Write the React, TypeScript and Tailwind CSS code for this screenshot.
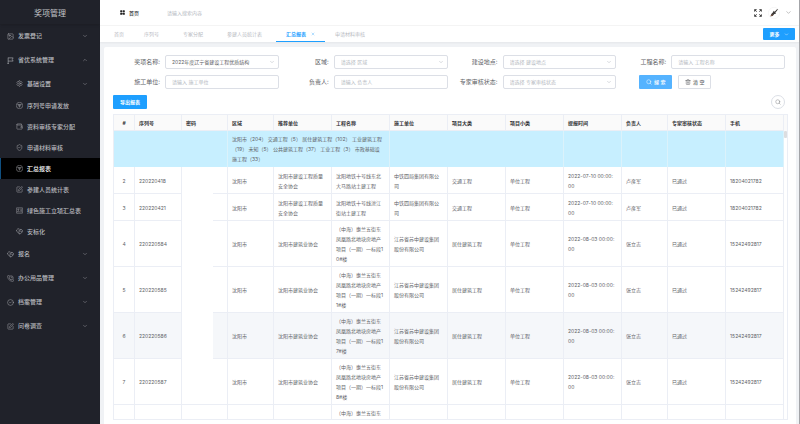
import { useState } from "react";
import {
  ChevronDown,
  ChevronUp,
  CircleCheck,
  Image,
  PhoneCall,
  Search,
  Settings,
  ShieldCheck,
  SquarePen,
  Trash2,
  Wallet,
  X,
} from "lucide-react";

function FlagIcon({ className }: { className?: string }) {
  return (
    <svg viewBox="0 0 24 24" fill="none" stroke="currentColor" strokeWidth="2" className={className}>
      <path d="M4 2v21M1 23h6M4 3h17l-3 5.5 3 5.5H4" />
    </svg>
  );
}

function SignalIcon({ className }: { className?: string }) {
  return (
    <svg viewBox="0 0 24 24" fill="none" stroke="currentColor" strokeWidth="1.5" className={className}>
      <circle cx="12" cy="12" r="11" />
      <path d="M5 9h14M8 12.5h8" strokeWidth="2" />
      <path d="M9 15h6l-3 3.5z" fill="currentColor" stroke="none" />
    </svg>
  );
}

function CardIcon({ className }: { className?: string }) {
  return (
    <svg viewBox="0 0 24 24" fill="none" stroke="currentColor" strokeWidth="1.6" className={className}>
      <rect x="1" y="3" width="22" height="18" rx="1" />
      <circle cx="8" cy="9" r="2" />
      <path d="M4 17c1-4 7-4 8 0M15 8h5M15 12h5M15 16h5" />
    </svg>
  );
}

function TagIcon({ className }: { className?: string }) {
  return (
    <svg viewBox="0 0 24 24" fill="none" stroke="currentColor" strokeWidth="1.8" className={className}>
      <path d="M12 20L2 11V7l4-4h5l3 3 3-2 5 4v5l-8 8z" />
      <path d="M14 6l-5 5 3 2 4-3 4 4M12 20l-3-4" />
    </svg>
  );
}

function GridIcon({ className }: { className?: string }) {
  return (
    <svg viewBox="0 0 24 24" fill="currentColor" className={className}>
      <rect x="1" y="1" width="10" height="10" rx="2" />
      <rect x="13" y="1" width="10" height="10" rx="2" />
      <rect x="1" y="13" width="10" height="10" rx="2" />
      <rect x="13" y="13" width="10" height="10" rx="2" />
    </svg>
  );
}

function FullscreenIcon({ className }: { className?: string }) {
  return (
    <svg viewBox="0 0 24 24" fill="none" stroke="currentColor" strokeWidth="3" className={className}>
      <path d="M2 8V2h6M2 2l6 6M16 2h6v6M22 2l-6 6M2 16v6h6M2 22l6-6M22 16v6h-6M22 22l-6-6" />
    </svg>
  );
}

function AvatarIcon({ className }: { className?: string }) {
  return (
    <svg viewBox="0 0 36 36" className={className}>
      <circle cx="18" cy="18" r="17" fill="#fff" stroke="#e8e8e8" />
      <path d="M7 29l3-8 5-5 2-5 3 3 7-7 3-1-2 4-6 7 2 3-5 1-5 6-5 1z" fill="#3d3a38" />
      <path d="M8 27l4-5 3 3-4 2z" fill="#8a5a44" />
    </svg>
  );
}

const menu = [
  { label: "发票登记", icon: Image, arrow: "down" },
  { label: "省优系统管理", icon: FlagIcon, arrow: "up" },
];

const subMenu = [
  { label: "序列号申请发放", icon: SignalIcon },
  { label: "资料审核专家分配", icon: Wallet },
  { label: "申请材料审核", icon: ShieldCheck },
  { label: "汇总报表", icon: SignalIcon },
  { label: "参建人员统计表", icon: SquarePen },
  { label: "绿色施工立项汇总表", icon: CardIcon },
  { label: "安标化", icon: TagIcon },
];

const menuBottom = [
  { label: "报名", icon: TagIcon, arrow: "down" },
  { label: "办公用品管理", icon: PhoneCall, arrow: "down" },
  { label: "档案管理", icon: CircleCheck, arrow: "down" },
  { label: "问卷调查", icon: SquarePen, arrow: "down" },
];

const tabs = ["首页", "序列号", "专家分配", "参建人员统计表", "汇总报表", "申请材料审核"];

const headers = [
  "#", "序列号", "密码", "区域", "推荐单位", "工程名称", "施工单位",
  "项目大类", "项目小类", "提报时间", "负责人", "专家审核状态", "手机",
];

const zhonghai = "（中海）惠兰五街东凤凰路北地块房地产项目（一期）一标段";

const rows = [
  ["2", "220220418", "", "沈阳市", "沈阳市建设工程质量安全协会", "沈阳地铁十号线东北大马路站土建工程", "中铁四局集团有限公司", "交通工程", "单位工程", "2022-07-10 00:00:00", "卢彦军", "已通过", "18204021782"],
  ["3", "220220421", "", "沈阳市", "沈阳市建设工程质量安全协会", "沈阳地铁十号线滂江街站土建工程", "中铁四局集团有限公司", "交通工程", "单位工程", "2022-07-10 00:00:00", "卢彦军", "已通过", "18204021782"],
  ["4", "220220584", "", "沈阳市", "沈阳市建筑业协会", zhonghai + "10#楼", "江苏省苏中建设集团股份有限公司", "居住建筑工程", "单位工程", "2022-08-03 00:00:00", "张立志", "已通过", "15242492817"],
  ["5", "220220585", "", "沈阳市", "沈阳市建筑业协会", zhonghai + "11#楼", "江苏省苏中建设集团股份有限公司", "居住建筑工程", "单位工程", "2022-08-03 00:00:00", "张立志", "已通过", "15242492817"],
  ["6", "220220586", "", "沈阳市", "沈阳市建筑业协会", zhonghai + "17#楼", "江苏省苏中建设集团股份有限公司", "居住建筑工程", "单位工程", "2022-08-03 00:00:00", "张立志", "已通过", "15242492817"],
  ["7", "220220587", "", "沈阳市", "沈阳市建筑业协会", zhonghai + "18#楼", "江苏省苏中建设集团股份有限公司", "居住建筑工程", "单位工程", "2022-08-03 00:00:00", "张立志", "已通过", "15242492817"],
  ["", "", "", "", "", "（中海）惠兰五街东", "", "", "", "", "", "", ""],
];

function MenuItem({ item }: { item: any }) {
  const Icon = item.icon;
  const Arrow = item.arrow === "up" ? ChevronUp : ChevronDown;
  return (
    <button className="flex h-6 w-full items-center pr-3 pl-[7px] text-left">
      <Icon className="mr-1 size-[7px]" strokeWidth={1.5} />
      <span className="flex-1 font-medium">{item.label}</span>
      <Arrow className="size-[6px]" strokeWidth={1.5} />
    </button>
  );
}

function Field({ id, label, placeholder, type, value }: any) {
  return (
    <div className="flex items-center">
      <label htmlFor={id} className="w-[55px] shrink-0 pr-[5px] text-right text-[6px] whitespace-nowrap text-[#606266]">
        {label}:
      </label>
      {type === "select" ? (
        <div className="relative min-w-0 flex-1">
          <select
            id={id}
            className={
              "block h-[14px] w-full appearance-none rounded-[2px] border border-[#dcdfe6] bg-white pr-3 pl-[6px] text-[5px] " +
              (value ? "text-[#606266]" : "text-[#b4b8c0]")
            }
          >
            <option>{value || placeholder}</option>
          </select>
          <ChevronDown className="pointer-events-none absolute top-1 right-1 size-[6px] text-[#b4b8c0]" strokeWidth={2} />
        </div>
      ) : (
        <input
          id={id}
          placeholder={placeholder}
          className="h-[14px] w-full min-w-0 flex-1 rounded-[2px] border border-[#dcdfe6] px-[6px] text-[5px] placeholder:text-[#b4b8c0]"
        />
      )}
    </div>
  );
}

function Columns() {
  return (
    <colgroup>
      <col className="w-[21px]" />
      <col className="w-[47px]" />
      <col className="w-[46px]" />
      <col className="w-[46px]" />
      <col className="w-[58px]" />
      <col className="w-[58px]" />
      <col className="w-[58px]" />
      <col className="w-[58px]" />
      <col className="w-[58px]" />
      <col className="w-[58px]" />
      <col className="w-[46px]" />
      <col className="w-[58px]" />
      <col className="w-[58px]" />
    </colgroup>
  );
}

export default function App() {
  const [activeTab, setActiveTab] = useState("汇总报表");

  return (
    <div lang="zh-CN" className="flex h-screen overflow-hidden bg-[#f0f2f5] font-['Inter','Noto_Sans_CJK_SC',sans-serif] text-[5px] leading-[10px] text-[#606266]">
      {/* Sidebar */}
      <aside className="w-[100px] shrink-0 bg-[#20222a] text-[6px] text-[#b9babf]">
        <h1 className="flex h-6 items-center justify-center pt-px text-[8px] text-[#c3c4c8] shadow-sm">奖项管理</h1>
        <nav>
          {menu.map((m) => (
            <MenuItem key={m.label} item={m} />
          ))}
          <button className="flex h-[23px] w-full items-center pr-3 pl-4 text-left">
            <Settings className="mr-1 size-[7px]" strokeWidth={1.5} />
            <span className="flex-1 font-medium">基础设置</span>
            <ChevronDown className="size-[6px]" strokeWidth={1.5} />
          </button>
          {subMenu.map((m) => {
            const Icon = m.icon;
            return (
              <a
                key={m.label}
                href="#"
                className={
                  "flex h-[21px] items-center border-l pl-[15px] font-medium " +
                  (m.label === "汇总报表" ? "border-[#0f4f80] bg-black text-white" : "border-transparent")
                }
              >
                <Icon className="mr-1 size-[7px] text-[#b9babf]" strokeWidth={1.5} />
                {m.label}
              </a>
            );
          })}
          {menuBottom.map((m) => (
            <MenuItem key={m.label} item={m} />
          ))}
        </nav>
      </aside>

      <div className="flex min-w-0 flex-1 flex-col border-r border-[#a3a4a8]">
        {/* Top bar */}
        <header className="flex h-[26px] shrink-0 items-center border-b border-[#f4f4f4] bg-white pr-[7px] pl-5">
          <GridIcon className="size-[5px] text-[#222]" />
          <a href="#" className="ml-1 w-[35px] font-medium text-[#303133]">首页</a>
          <input aria-label="搜索" placeholder="请输入搜索内容" className="min-w-0 flex-1 pl-[3px] placeholder:text-[#b4b8c0]" />
          <button aria-label="全屏">
            <FullscreenIcon className="size-2 text-[#444]" />
          </button>
          <button aria-label="用户" className="ml-[6px] flex items-center gap-[5px]">
            <AvatarIcon className="size-3" />
            <ChevronDown className="size-[7px] text-[#777]" strokeWidth={1.5} />
          </button>
        </header>

        {/* Tabs */}
        <div className="flex h-4 shrink-0 items-center justify-between bg-white pr-1 pl-1 shadow-xs">
          <div className="flex h-full">
            {tabs.map((t) => {
              const active = t === activeTab;
              return (
                <button
                  key={t}
                  onClick={() => setActiveTab(t)}
                  className={
                    "flex h-full items-center border-b pl-[10px] whitespace-nowrap " +
                    (active ? "border-[#1e9fff] pr-[10px] font-bold text-[#1e9fff]" : "border-transparent text-[#b8babf] " + (t === "首页" ? "pr-[10px]" : "pr-[14px]"))
                  }
                >
                  {t}
                  {active && <X className="ml-[5px] size-1" strokeWidth={2} />}
                </button>
              );
            })}
          </div>
          <button className="flex h-3 w-8 items-center justify-center gap-1 rounded-[1px] bg-[#1e9fff] font-bold text-white">
            更多
            <ChevronDown className="size-[5px]" strokeWidth={2} />
          </button>
        </div>

        <main className="mt-[5px] mr-[3px] ml-1 flex min-h-0 flex-1 flex-col rounded-t-[2px] bg-white pb-1">
          {/* Filters */}
          <form className="grid grid-cols-4 gap-y-[6px] pt-2 pr-[11px] pl-[6px]" onSubmit={(e) => e.preventDefault()}>
            <Field id="award" label="奖项名称" type="select" value="2022年度辽宁省建设工程优质结构" />
            <Field id="area" label="区域" type="select" placeholder="请选择 区域" />
            <Field id="place" label="建设地点" type="select" placeholder="请选择 建设地点" />
            <Field id="project" label="工程名称" placeholder="请输入 工程名称" />
            <Field id="builder" label="施工单位" placeholder="请输入 施工单位" />
            <Field id="owner" label="负责人" placeholder="请输入 负责人" />
            <Field id="status" label="专家审核状态" type="select" placeholder="请选择 专家审核状态" />
            <div className="flex gap-[6px] pl-[23px]">
              <button className="flex h-[14px] w-[33px] items-center justify-center gap-[2px] rounded-[1px] bg-[#55b3ff] font-medium text-white">
                <Search className="size-[6px]" strokeWidth={2} />
                搜 索
              </button>
              <button className="flex h-[14px] w-[33px] items-center justify-center gap-[2px] rounded-[1px] border border-[#dcdfe6] font-medium">
                <Trash2 className="size-[6px]" strokeWidth={2} />
                清 空
              </button>
            </div>
          </form>

          <div className="flex justify-between pt-[6px] pr-[11px] pl-[9px]">
            <button className="h-[14px] w-[34px] rounded-[1px] bg-[#1e9fff] font-bold text-white">导出报表</button>
            <button aria-label="搜索" className="flex size-[14px] items-center justify-center rounded-full border border-[#dcdfe6]">
              <Search className="size-[6px]" strokeWidth={1.5} />
            </button>
          </div>

          {/* Table */}
          <div className="mt-[5px] mr-2 ml-[9px] flex min-h-0 flex-1 flex-col border border-[#ebeef5]">
            <div className="bg-[#fafafa] pr-[3px]">
              <table className="w-full table-fixed border-separate border-spacing-0">
                <Columns />
                <thead>
                  <tr>
                    {headers.map((h) => (
                      <th
                        key={h}
                        className={
                          "h-4 border-r border-b border-[#ebeef5] px-1 font-bold whitespace-nowrap text-[#303133] " +
                          (h === "#" ? "text-center" : "text-left")
                        }
                      >
                        {h}
                      </th>
                    ))}
                  </tr>
                </thead>
              </table>
            </div>
            <div className="relative min-h-0 flex-1 overflow-hidden pr-[3px]">
              <table className="w-full table-fixed border-separate border-spacing-0">
                <Columns />
                <tbody>
                  <tr className="bg-[#c7efff]">
                    <td colSpan={3} className="h-9 border-r border-[#dbf2fb]"></td>
                    <td colSpan={3} className="border-r border-[#dbf2fb] pr-[6px] pl-1 break-all">
                      沈阳市（204） 交通工程（5） 居住建筑工程（102） 工业建筑工程（19） 未知（5） 公共建筑工程（37） 工业工程（3） 市政基础设施工程（33）
                    </td>
                    <td colSpan={3} className="border-r border-[#dbf2fb]"></td>
                    <td className="border-r border-[#dbf2fb]"></td>
                    <td className="border-r border-[#dbf2fb]"></td>
                    <td className="border-r border-[#dbf2fb]"></td>
                    <td className="border-r border-[#dbf2fb]"></td>
                  </tr>
                  {rows.map((r) => (
                    <tr key={r[1]} className={r[0] === "6" ? "bg-[#f5f7fa]" : ""}>
                      {r.map((c, i) => (
                        <td
                          key={i}
                          className={
                            "h-[27px] border-r border-b border-[#ebeef5] pt-[3px] pb-[2px] pl-1 break-all " +
                            (r[0] ? "align-middle " : "align-top ") +
                            (i === 9 ? "pr-[6px]" : "pr-1") +
                            (i === 0 ? " text-center" : "")
                          }
                        >
                          {c}
                        </td>
                      ))}
                    </tr>
                  ))}
                </tbody>
              </table>
              {/* password mask */}
              <div className="absolute top-9 left-[68px] h-[237px] w-[31px] bg-white"></div>
              <div className="absolute top-0 right-0 h-[7px] w-[3px] rounded-[1px] bg-[#dddee0]"></div>
            </div>
          </div>
        </main>
      </div>
    </div>
  );
}
